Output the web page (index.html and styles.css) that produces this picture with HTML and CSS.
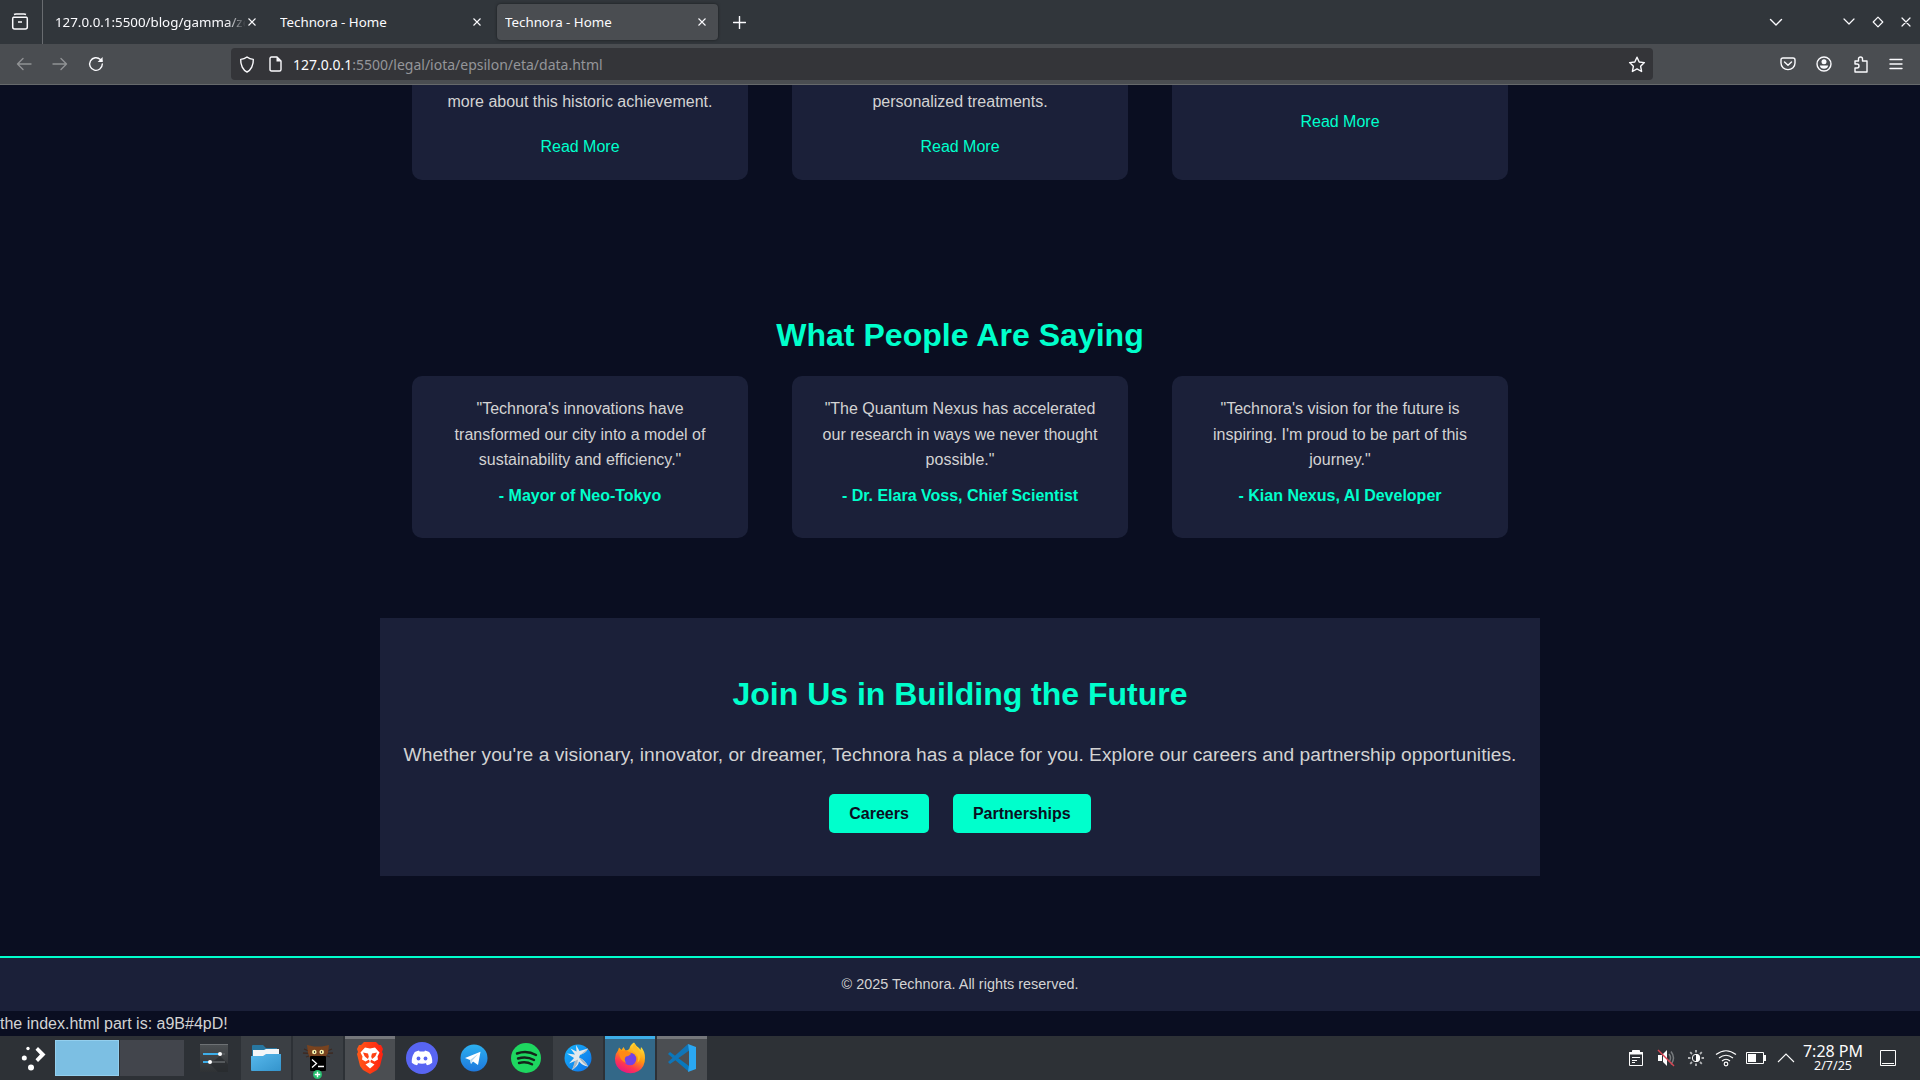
FILE: index.html
```html
<!DOCTYPE html>
<html lang="en">
<head>
<meta charset="utf-8">
<title>Technora - Home</title>
<link rel="stylesheet" href="styles.css">
</head>
<body>
<div class="screen">
<header class="tabbar">
  <div class="firefox-view"><svg width="18" height="18" viewBox="0 0 18 18" fill="none" stroke="#fbfbfe" stroke-width="1.5"><path d="M3 1.5Q4 1 5 .9H13Q14 1 15 1.5M2.5 4.3H15.5Q16.3 4.5 16.3 6V14Q16.3 16 14.3 16H3.7Q1.7 16 1.7 14V6Q1.7 4.5 2.5 4.3ZM7 9H11"/></svg></div>
  <div class="tab tab-first"><span class="tab-title faded">127.0.0.1:5500/blog/gamma/zeta</span><svg class="close" viewBox="0 0 8 8"><path d="M.5.5 7.5 7.5M7.5.5.5 7.5"/></svg></div>
  <div class="tab"><span class="tab-title">Technora - Home</span><svg class="close" viewBox="0 0 8 8"><path d="M.5.5 7.5 7.5M7.5.5.5 7.5"/></svg></div>
  <div class="tab active"><span class="tab-title">Technora - Home</span><svg class="close" viewBox="0 0 8 8"><path d="M.5.5 7.5 7.5M7.5.5.5 7.5"/></svg></div>
  <svg class="line new-tab" width="13" height="13" viewBox="0 0 13 13"><path d="M6.5 .5V12.5M.5 6.5H12.5"/></svg>
  <div class="window-controls">
    <svg class="line all-tabs" width="14" height="9" viewBox="0 0 14 9"><path d="M1.5 1.5 7 7 12.5 1.5"/></svg>
    <svg class="line thin" width="12" height="8" viewBox="0 0 12 8"><path d="M1 1 6 6 11 1"/></svg>
    <svg class="line thin" width="12" height="12" viewBox="0 0 12 12"><path d="M6 1.2 10.8 6 6 10.8 1.2 6Z"/></svg>
    <svg class="line thin" width="10" height="10" viewBox="0 0 10 10"><path d="M1 1 9 9M9 1 1 9"/></svg>
  </div>
</header>
<nav class="toolbar">
  <div class="nav-buttons">
    <svg class="line dim" width="16" height="16" viewBox="0 0 16 16"><path d="M15 8H1.5M7 2.5 1.5 8 7 13.5"/></svg>
    <svg class="line dim" width="16" height="16" viewBox="0 0 16 16"><path d="M1 8H14.5M9 2.5 14.5 8 9 13.5"/></svg>
    <svg class="line" width="16" height="16" viewBox="0 0 16 16"><path d="M14.3 8A6.3 6.3 0 1 1 12.4 3.5L14 5"/><path class="solid" d="M14.6 1V6H9.6Z"/></svg>
  </div>
  <div class="urlbar">
    <svg class="line" width="16" height="17" viewBox="0 0 16 17"><path d="M8 1C10 2.7 12 3.3 14.3 3.4 14.6 9 12 14.2 8 16 4 14.2 1.4 9 1.7 3.4 4 3.3 6 2.7 8 1Z"/></svg>
    <svg class="line page-icon" width="13" height="16" viewBox="0 0 13 16"><path d="M1 2.5Q1 1 2.5 1H8L12 5V13.5Q12 15 10.5 15H2.5Q1 15 1 13.5Z"/><path class="solid" d="M7.5 1V5.5H12Z"/></svg>
    <span class="url"><b>127.0.0.1</b>:5500/legal/iota/epsilon/eta/data.html</span>
    <svg class="line star" width="18" height="17" viewBox="0 0 18 17"><path d="M9 1.2 11.2 6 16.4 6.6 12.6 10.2 13.6 15.5 9 12.9 4.4 15.5 5.4 10.2 1.6 6.6 6.8 6Z"/></svg>
  </div>
  <div class="toolbar-icons">
    <svg class="line" width="16" height="16" viewBox="0 0 16 16"><path d="M3 2H13Q15 2 15 4V7A7 6.6 0 0 1 1 7V4Q1 2 3 2ZM4.5 6 8 9.3 11.5 6"/></svg>
    <svg class="line" width="16" height="16" viewBox="0 0 16 16"><circle cx="8" cy="8" r="7"/><circle class="solid" cx="8" cy="5.8" r="2.5"/><path class="solid" d="M3.8 9.5H12.2Q11.5 12.8 8 12.8T3.8 9.5Z"/></svg>
    <svg class="line" width="16" height="17" viewBox="0 0 16 17"><path d="M2 5H5.5V3A2 2 0 0 1 9.5 3V5H14V16H2V12H4A2 2 0 0 0 4 8H2Z"/></svg>
    <svg class="line" width="14" height="12" viewBox="0 0 14 12"><path d="M1 1.5H13M1 6H13M1 10.5H13"/></svg>
  </div>
</nav>

<main class="page">
  <section class="cards news">
    <article class="card"><p>more about this historic achievement.</p><a>Read More</a></article>
    <article class="card"><p>personalized treatments.</p><a>Read More</a></article>
    <article class="card short"><a>Read More</a></article>
  </section>
  <h2 class="section-title">What People Are Saying</h2>
  <section class="cards">
    <article class="card quote"><p>"Technora's innovations have transformed our city into a model of sustainability and efficiency."</p><strong>- Mayor of Neo-Tokyo</strong></article>
    <article class="card quote"><p>"The Quantum Nexus has accelerated our research in ways we never thought possible."</p><strong>- Dr. Elara Voss, Chief Scientist</strong></article>
    <article class="card quote"><p>"Technora's vision for the future is inspiring. I'm proud to be part of this journey."</p><strong>- Kian Nexus, AI Developer</strong></article>
  </section>
  <section class="cta">
    <h2>Join Us in Building the Future</h2>
    <p>Whether you're a visionary, innovator, or dreamer, Technora has a place for you. Explore our careers and partnership opportunities.</p>
    <div class="buttons"><a>Careers</a><a>Partnerships</a></div>
  </section>
  <footer class="footer">© 2025 Technora. All rights reserved.</footer>
  <div class="note">the index.html part is: a9B#4pD!</div>
</main>

<footer class="taskbar">
  <div class="launcher"><svg width="26" height="26" viewBox="0 0 26 26" fill="#fff"><circle cx="8" cy="3.5" r="1.7"/><circle cx="4.3" cy="13" r="2.5"/><circle cx="11" cy="22.6" r="3"/><path d="M15.5 4.8 18 2 25.5 9.5 18 17 15.5 14.2 20 9.5Z"/></svg></div>
  <div class="pager"><i class="current"></i><i></i></div>
  <div class="apps">
    <div class="app"><svg width="28" height="28" viewBox="0 0 28 28"><defs><linearGradient id="g1" x2="0" y2="1"><stop stop-color="#4d5154"/><stop offset="1" stop-color="#2f3235"/></linearGradient></defs><path fill="url(#g1)" d="M0 0H28V28H0Z"/><path fill="#25282b" d="M20 12 28 20V28H18L10 20Z" opacity=".6"/><path stroke="#6d7174" d="M0 .5H28"/><path stroke="#55595c" stroke-width="2" d="M3 10H25M3 18H25"/><path stroke="#3daee9" stroke-width="2" d="M3 10H20M3 18H10"/><circle cx="20" cy="10" r="2" fill="#fff"/><circle cx="10" cy="18" r="2" fill="#fff"/></svg></div>
    <div class="app open"><svg width="32" height="28" viewBox="0 0 32 28"><defs><linearGradient id="g2" x2="1" y2="1"><stop stop-color="#57b8ec"/><stop offset="1" stop-color="#3494cc"/></linearGradient></defs><path fill="#2876a0" d="M2 2Q2 1 3 1H13L16 4H27V20H2Z"/><path fill="#f4f6f8" d="M3 6H14L16 5H29V20H3Z"/><path fill="url(#g2)" d="M1 12H13L16 10H31V26Q31 27 30 27H2Q1 27 1 26Z"/></svg></div>
    <div class="app open terminal"><svg width="32" height="36" viewBox="0 0 32 36"><path d="M2 5 9 8M1 9 9 9.5M4 13 10 11M30 5 23 8M31 9 23 9.5M28 13 22 11" stroke="#3e2a22" stroke-width="1.3"/><path fill="#79431f" d="M5 1 12 2.5H20L27 1 26 9 23 14 19 16H13L8 14 6 9Z"/><circle cx="12.3" cy="8" r="2.3" fill="#f2eea8"/><circle cx="19.7" cy="8" r="2.3" fill="#f2eea8"/><path fill="#444" d="M12 7h1v2h-1zM19 7h1v2h-1z"/><rect x="8" y="12" width="16" height="15" rx="1" fill="#000"/><path d="M10 15.5 14.5 19.5 10 23.5M16 22.5H22" fill="none" stroke="#fff" stroke-width="1.3"/><circle cx="15.5" cy="30.5" r="4.5" fill="#27c070"/><path d="M12.8 30.5H18.2M15.5 27.8V33.2" stroke="#fff" stroke-width="1.4"/></svg></div>
    <div class="app open window"><svg width="28" height="32" viewBox="0 0 28 32"><defs><linearGradient id="g3"><stop stop-color="#ff5a18"/><stop offset="1" stop-color="#ff2010"/></linearGradient></defs><path fill="url(#g3)" d="M8 0H20L23 3 25 3 27 7 26 10 27 12 24 24 21 28 14 32 7 28 4 24 1 12 2 10 1 7 3 3 5 3Z"/><path fill="#fff" d="M9 5.5 14 6.5 19 5.5 23.5 10.5 21.5 14.5 22 17.5 18.5 19.5 14 17 9.5 19.5 6 17.5 6.5 14.5 4.5 10.5Z"/><path fill="#fff" d="M14 20 18.5 22.5 14 26.5 9.5 22.5Z"/><path fill="#ff4215" d="M7 10.5 12 11.5 12.8 14.5 12 17 10 15.5 8.5 14ZM21 10.5 16 11.5 15.2 14.5 16 17 18 15.5 19.5 14Z"/><path fill="#fff" d="M12.5 16H15.5L14 21Z"/></svg></div>
    <div class="app"><svg width="32" height="32" viewBox="0 0 32 32"><circle cx="16" cy="16" r="16" fill="#5865f2"/><path fill="#fff" d="M13 8.5 13.6 9.6Q16 9.2 18.4 9.6L19 8.5Q21.5 9 23.2 10 26.7 15 26.2 20.7 23.5 22.8 21 23.3L19.8 21.4 21 20.7Q16 22.6 11 20.7L12.2 21.4 11 23.3Q8.5 22.8 5.8 20.7 5.3 15 8.8 10 10.5 9 13 8.5Z"/><ellipse cx="12.5" cy="16.5" rx="1.9" ry="2.1" fill="#5865f2"/><ellipse cx="19.5" cy="16.5" rx="1.9" ry="2.1" fill="#5865f2"/></svg></div>
    <div class="app"><svg width="28" height="28" viewBox="0 0 28 28"><defs><linearGradient id="g4" x2="0" y2="1"><stop stop-color="#2cb0f0"/><stop offset="1" stop-color="#1e78dd"/></linearGradient></defs><circle cx="14" cy="14" r="13.5" fill="url(#g4)"/><path fill="#fff" d="M5 14 20.5 7.7 18 21 13 17.5 11 20 10 16Z"/><path fill="#b8d8ee" d="M10 16 18 10 12 17 11 20Z"/></svg></div>
    <div class="app"><svg width="32" height="32" viewBox="0 0 32 32"><circle cx="16" cy="16" r="15" fill="#1ed760"/><path d="M7 11.5Q17 8 26 13M8 16.5Q16.5 13.8 24 18M9 21Q16 19 22 22.3" fill="none" stroke="#15251b" stroke-width="2.4" stroke-linecap="round"/></svg></div>
    <div class="app open"><svg width="28" height="28" viewBox="0 0 28 28"><defs><linearGradient id="g6" x2="1" y2="1"><stop stop-color="#17b4fb"/><stop offset="1" stop-color="#0d6fe8"/></linearGradient></defs><circle cx="14" cy="14" r="13.5" fill="url(#g6)"/><path fill="#e4e9ed" d="M12 1 15.5 7 24 4.5Q22 9 16 11L15 13.5Q21 16 24 22.5 19 22 15 17.5 14.5 22 8 26 11 21 11 17L5 19.5 10 14 3 9.5 11 10.5 6.5 4.5 12.5 7.5Z"/><path fill="#aab7c2" d="M16 11 24 4.5Q22 9 16 11ZM15 13.5Q21 16 24 22.5 18 19 15 13.5ZM11 17 14 15.5Q13.5 22 8 26Z"/></svg></div>
    <div class="app open focused"><svg width="32" height="32" viewBox="0 0 32 32"><defs><linearGradient id="g5" x1=".8" y1="0" x2=".3" y2="1"><stop stop-color="#fff044"/><stop offset=".45" stop-color="#ff980e"/><stop offset=".75" stop-color="#ff3750"/><stop offset="1" stop-color="#e31587"/></linearGradient></defs><path fill="url(#g5)" d="M20 .5Q22 4 25 6L26.5 8 27 5Q31 9 31 16 31 25 24.5 29 16.5 33.5 8 29 1 25 1 17 .8 12 4 8.5L5 5.5 7.5 8 9.5 5 11.5 8.5Q14.5 8.5 15.5 6.5 16 3 20 .5Z"/><circle cx="16" cy="17" r="6.3" fill="#7542e5"/><path fill="#ff8a16" d="M5 10 11 8.5Q16 9.5 17 12 14 14.5 12 14.5 9.5 17 12 21 5 18 5 10Z"/><path fill="#ffbd24" d="M19 9Q26 13 23.5 21 29 15 24 7L20 1Q18 6 19 9Z"/></svg></div>
    <div class="app open window"><svg width="28" height="28" viewBox="0 0 28 28"><path fill="#0878bd" d="M0 10 2 8 21 22V27L20 27Z"/><path fill="#1075b8" d="M0 18 20 0 22 6 2 20Z"/><path fill="#2aa7f2" d="M20 0 28 3V25L20 28 21 21V7Z"/></svg></div>
  </div>
  <div class="tray">
    <div class="tray-icon"><svg width="16" height="18" viewBox="0 0 16 18" fill="none" stroke="#fcfcfc"><path d="M1.5 3.5H14.5V16.5H1.5Z"/><path fill="#fcfcfc" d="M4.5 1.5H11.5V4.5H4.5ZM1.5 3.5H14.5V5H1.5Z"/><path d="M4 8.5H12M4 11.5H9M4 13.5H7"/></svg></div>
    <div class="tray-icon"><svg width="18" height="18" viewBox="0 0 18 18"><path fill="#fcfcfc" d="M1 6H5V12H1ZM6 5 10 1V17L6 13Z"/><path d="M12 5Q15 9 12 13M14 2.5Q19 9 14 15.5" fill="none" stroke="#777b7e" stroke-width="1.5"/><path d="M1 1 17 17" stroke="#da4453" stroke-width="1.4"/></svg></div>
    <div class="tray-icon"><svg width="18" height="18" viewBox="0 0 18 18"><g stroke="#b4b6b8" stroke-width="1.8"><path d="M9 1V3.5M9 14.5V17M1 9H3.5M14.5 9H17M3.2 3.2 5 5M13 13 14.8 14.8M3.2 14.8 5 13M13 5 14.8 3.2"/></g><circle cx="9" cy="9" r="3.7" fill="none" stroke="#fcfcfc"/><path fill="#fcfcfc" d="M9 5A4 4 0 0 1 9 13Z"/></svg></div>
    <div class="tray-icon"><svg width="22" height="18" viewBox="0 0 22 18" fill="none" stroke="#fcfcfc" stroke-width="1.2"><path d="M1 5.5Q11-2 21 5.5M4 9Q11 3.5 18 9M7 12Q11 8.5 15 12"/><circle cx="11" cy="15" r="1.8"/></svg></div>
    <div class="tray-icon"><svg width="20" height="14" viewBox="0 0 20 14"><path fill="none" stroke="#fcfcfc" d="M.5 1.5H17.5V12.5H.5Z"/><path fill="#fcfcfc" d="M2 3H10V11H2ZM18 4H20V10H18Z"/></svg></div>
    <div class="tray-icon"><svg width="18" height="10" viewBox="0 0 18 10" fill="none" stroke="#fcfcfc" stroke-width="1.1"><path d="M1 9 9 1 17 9"/></svg></div>
    <div class="clock"><span class="time">7:28 PM</span><span class="date">2/7/25</span></div>
    <svg width="16" height="16" viewBox="0 0 16 16" fill="none" stroke="#fcfcfc"><path d="M.5.5H15.5V15.5H.5ZM2 13.5H14"/></svg>
  </div>
</footer>
</div>
</body>
</html>
```
FILE: styles.css
```css
* { box-sizing: border-box; }
body { margin: 0; background: #0a0e21; font-family: "Liberation Sans", Arial, sans-serif; }
h2, p { margin: 0; }
svg { display: block; flex: none; }
.screen { width: 1920px; height: 1080px; display: flex; flex-direction: column; overflow: hidden; }
.line { fill: none; stroke: #fbfbfe; stroke-width: 1.4; stroke-linejoin: round; stroke-linecap: round; }
.line .solid { fill: #fbfbfe; stroke: none; }
.thin { stroke-width: 1.2; }
.dim { stroke: #909294; }

/* browser chrome */
.tabbar { height: 44px; flex: none; display: flex; align-items: center; background: #31363b; font: 13.33px "Noto Sans", sans-serif; color: #fbfbfe; }
.firefox-view { width: 43px; height: 44px; flex: none; display: flex; align-items: center; padding-left: 11px; border-right: 1px solid #696c70; }
.tab { width: 221px; height: 36px; margin-right: 4px; padding: 0 12px 0 8px; display: flex; align-items: center; justify-content: space-between; border-radius: 4px; }
.tab-first { width: 225px; padding: 0 12px 0 12px; }
.tab-title { white-space: nowrap; overflow: hidden; }
.faded { width: 190px; -webkit-mask-image: linear-gradient(to right, #000 172px, transparent 191px); mask-image: linear-gradient(to right, #000 172px, transparent 191px); }
.close { width: 8px; height: 8px; fill: none; stroke: #fbfbfe; stroke-width: 1.1; overflow: visible; }
.active { background: #4a4d51; box-shadow: 0 0 3px rgba(0, 0, 0, .5); }
.new-tab { margin-left: 11px; }
.window-controls { margin-left: auto; display: flex; align-items: center; gap: 17px; padding-right: 9px; }
.all-tabs { margin-right: 43px; }
.toolbar { height: 41px; flex: none; display: flex; align-items: center; background: #4a4d51; border-bottom: 1px solid #66696b; }
.nav-buttons { width: 231px; padding-left: 16px; display: flex; gap: 20px; }
.urlbar { width: 1422px; height: 32px; padding: 0 7px 0 8px; display: flex; align-items: center; background: #343539; border-radius: 4px; font: 14px "Noto Sans", sans-serif; color: #949599; }
.page-icon { margin-left: 14px; }
.url { margin-left: 11px; }
.url b { font-weight: 400; color: #fbfbfe; }
.star { margin-left: auto; }
.toolbar-icons { margin-left: auto; padding-right: 17px; display: flex; align-items: center; gap: 20.5px; }

/* page */
.page { height: 951px; flex: none; overflow: hidden; color: #d3d3d3; font-size: 16px; line-height: 25.6px; text-align: center; }
.cards { width: 1096px; margin: 0 auto; display: grid; grid-template-columns: repeat(3, 336px); gap: 44px; }
.card { background: #1b2039; border-radius: 10px; padding: 20px 25px; }
.card a, .card strong { color: #00ffcc; }
.news .card { height: 95px; border-radius: 0 0 10px 10px; padding-top: 4px; display: flex; flex-direction: column; align-items: center; gap: 19px; }
.news .short { padding-top: 24px; }
.section-title { margin-top: 130px; font-size: 32px; line-height: 51px; letter-spacing: .03px; color: #00ffcc; }
.section-title + .cards { margin-top: 15px; }
.quote { height: 162px; }
.quote strong { display: block; margin-top: 10px; }
.cta { width: 1160px; height: 258px; margin: 80px auto 0; padding-top: 51px; background: #1b2039; }
.cta h2 { font-size: 32px; line-height: 51px; color: #00ffcc; }
.cta p { margin-top: 19px; font-size: 19.2px; line-height: 31px; letter-spacing: .013px; white-space: nowrap; }
.buttons { margin-top: 24px; display: flex; justify-content: center; gap: 24px; }
.buttons a { height: 39px; padding: 0 20px; line-height: 39px; border-radius: 5px; background: #00ffcc; color: #0a0e21; font-weight: 700; }
.footer { margin-top: 80px; height: 55px; padding-top: 15px; border-top: 2px solid #00ffcc; background: #1b2039; font-size: 14.4px; line-height: 23px; letter-spacing: .03px; }
.note { text-align: left; line-height: 25px; }

/* desktop panel */
.taskbar { height: 44px; flex: none; display: flex; align-items: center; background: #2d3136; color: #fcfcfc; font-family: "Noto Sans", sans-serif; }
.launcher { width: 55px; padding-left: 20px; }
.pager { display: flex; gap: 1px; }
.pager i { width: 64px; height: 36px; background: #42454c; }
.pager .current { background: #7cbfe3; border: 1px solid #93cfee; }
.apps { display: flex; gap: 2px; margin-left: 5px; }
.app { width: 50px; height: 44px; display: flex; align-items: center; justify-content: center; border-top: 3px solid transparent; padding-bottom: 3px; }
.terminal { padding-bottom: 0; align-items: flex-end; }
.open { background-color: #3b3f44; }
.window { background-color: #4b4e52; border-top-color: #75777b; }
.focused { background-color: #336888; border-top-color: #3daee9; }
.tray { margin-left: auto; display: flex; align-items: center; padding-right: 24px; }
.tray-icon { width: 30px; display: flex; justify-content: center; }
.clock { width: 62px; margin: 0 16px 0 1px; display: flex; flex-direction: column; align-items: center; white-space: nowrap; }
.time { font-size: 16px; line-height: 15px; }
.date { font-size: 12.5px; line-height: 14px; }
```
